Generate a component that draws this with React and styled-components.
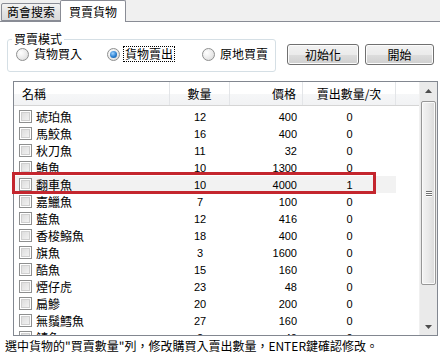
import React from "react";
import styled, { createGlobalStyle } from "styled-components";

const Global = createGlobalStyle`
  html, body { margin: 0; padding: 0; background: #fff; }
  body { font-family: "Noto Sans CJK TC", "Liberation Sans", sans-serif; font-size: 12px; color: #000; }
`;

const CJK = `"Noto Sans CJK TC", "Liberation Sans", sans-serif`;
const NUM = `"Liberation Sans", "Noto Sans CJK TC", sans-serif`;

const Window = styled.div`
  position: relative;
  width: 440px;
  height: 359px;
  overflow: hidden;
  background: #fff;
  font-family: ${CJK};
`;

const TabStrip = styled.div`
  height: 21px;
  background: #f0f0f0;
  border-bottom: 1px solid #898c95;
  display: flex;
  align-items: flex-end;
  padding-left: 1px;
`;

const Tab = styled.div`
  box-sizing: border-box;
  height: ${(p) => (p.$active ? "22px" : "18px")};
  margin-bottom: ${(p) => (p.$active ? "-1px" : "0")};
  margin-left: ${(p) => (p.$active ? "-1px" : "0")};
  padding: ${(p) => (p.$active ? "0 8px" : "0 5px")};
  border: 1px solid #898c95;
  border-bottom: ${(p) => (p.$active ? "none" : "1px solid #898c95")};
  border-radius: 2px 2px 0 0;
  background: ${(p) => (p.$active ? "#fff" : "linear-gradient(#f3f3f3, #e3e3e3 50%, #dadada)")};
  font-size: 12px;
  line-height: ${(p) => (p.$active ? "22px" : "16px")};
  white-space: nowrap;
`;

const TopRow = styled.div`
  display: flex;
  align-items: flex-start;
  padding: 10px 0 0 7px;
`;

const GroupBox = styled.fieldset`
  box-sizing: border-box;
  width: 269px;
  height: 40px;
  margin: 0;
  padding: 0 0 0 4px;
  border: 1px solid #d5dfe5;
  border-radius: 3px;
`;

const Legend = styled.legend`
  padding: 0 2px;
  font-size: 12px;
  line-height: 14px;
`;

const RadioRow = styled.div`
  display: grid;
  grid-template-columns: 91px 95px auto;
  align-items: center;
  height: 16px;
  margin-left: 4px;
`;

const RadioLabel = styled.label`
  display: flex;
  align-items: center;
  gap: 4px;
  font-size: 12px;
  line-height: 14px;
  white-space: nowrap;
`;

const RadioCircle = styled.span`
  position: relative;
  box-sizing: border-box;
  width: 13px;
  height: 13px;
  border-radius: 50%;
  border: 1px solid #8e8f8f;
  background: radial-gradient(circle at 35% 35%, #ffffff, #e8e8e8 60%, #d4d4d4);
  flex: none;
  &::after {
    content: "";
    display: ${(p) => (p.$checked ? "block" : "none")};
    position: absolute;
    left: 2px;
    top: 2px;
    width: 7px;
    height: 7px;
    border-radius: 50%;
    background: radial-gradient(circle at 40% 35%, #9fd3ff, #2a7fd0 55%, #134f8f);
  }
`;

const FocusText = styled.span`
  outline: ${(p) => (p.$focus ? "1px dotted #000" : "none")};
  outline-offset: 0;
  padding: 0 1px;
`;

const Buttons = styled.div`
  display: flex;
  gap: 6px;
  margin: 12px 0 0 11px;
`;

const Button = styled.button`
  box-sizing: border-box;
  width: ${(p) => p.$w}px;
  height: 21px;
  padding: 0;
  border: 1px solid #707070;
  border-radius: 3px;
  background: linear-gradient(#f2f2f2, #ebebeb 50%, #dddddd 51%, #cfcfcf);
  box-shadow: inset 0 0 0 1px #fcfcfc;
  font-family: ${CJK};
  font-size: 12px;
  line-height: 19px;
  color: #000;
`;

const ListBox = styled.div`
  box-sizing: border-box;
  display: flex;
  width: 425px;
  height: 255px;
  margin: 9px 0 0 13px;
  border: 1px solid #828790;
`;

const ListBody = styled.div`
  flex: 1;
  overflow: hidden;
`;

const COLS = "156px 60px 73px 93px 1fr";

const Header = styled.div`
  display: grid;
  grid-template-columns: ${COLS};
  height: 23px;
  border-bottom: 1px solid #d5d5d5;
  background: linear-gradient(#ffffff, #ffffff 50%, #f6f7f8 51%, #f1f2f4);
`;

const HeadCell = styled.div`
  display: flex;
  align-items: center;
  justify-content: ${(p) => p.$align || "flex-start"};
  padding: ${(p) => p.$pad || "0"};
  border-right: ${(p) => (p.$last ? "none" : "1px solid #e3e5e8")};
  font-size: 12px;
  white-space: nowrap;
`;

const Rows = styled.div`
  padding-top: 2px;
`;

const Row = styled.div`
  display: grid;
  grid-template-columns: 156px 60px 73px 93px;
  width: 382px;
  height: 17px;
  align-items: center;
  background: ${(p) => (p.$hot ? "#f2f2f2" : "transparent")};
`;

const NameCell = styled.div`
  display: flex;
  align-items: center;
  gap: 4px;
  padding-left: 5px;
  font-size: 12px;
  line-height: 17px;
  white-space: nowrap;
`;

const Check = styled.span`
  box-sizing: border-box;
  width: 13px;
  height: 13px;
  border: 1px solid #8e8f8f;
  background: #f4f4f4;
  box-shadow: inset 0 0 0 1px #fff, inset 0 0 0 2px #cfcfcf;
  background-image: linear-gradient(135deg, #d8d8d8, #f7f7f7);
  flex: none;
`;

const NumCell = styled.div`
  font-family: ${NUM};
  font-size: 11px;
  text-align: ${(p) => p.$align || "center"};
  padding-right: ${(p) => p.$pr || 0}px;
`;

const Scrollbar = styled.div`
  display: flex;
  flex-direction: column;
  width: 17px;
  background: #eaeaea;
  border-left: 1px solid #f0f0f0;
`;

const ArrowBtn = styled.div`
  height: 17px;
  display: flex;
  align-items: center;
  justify-content: center;
  flex: none;
`;

const Track = styled.div`
  flex: 1;
  padding: 2px 0 0 1px;
`;

const Thumb = styled.div`
  box-sizing: border-box;
  height: 184px;
  width: 15px;
  border: 1px solid #979797;
  border-radius: 2px;
  background: linear-gradient(90deg, #f4f4f4, #e9e9e9 50%, #dadada);
  box-shadow: inset 0 0 0 1px #fafafa;
  display: flex;
  align-items: center;
  justify-content: center;
`;

const Grip = styled.div`
  display: flex;
  flex-direction: column;
  gap: 1px;
  span {
    display: block;
    width: 6px;
    height: 1px;
    background: #6f6f6f;
    box-shadow: 0 1px 0 #fff;
  }
`;

const Status = styled.div`
  padding: 2px 0 0 5px;
  font-size: 12px;
  line-height: 16px;
  white-space: nowrap;
`;

const Highlight = styled.div`
  position: absolute;
  left: 12px;
  top: 172px;
  width: 364px;
  height: 22px;
  box-sizing: border-box;
  border: 3px solid #c4262e;
  pointer-events: none;
`;

const fish = [
  ["琥珀魚", 12, 400, 0],
  ["馬鮫魚", 16, 400, 0],
  ["秋刀魚", 11, 32, 0],
  ["鮪魚", 10, 1300, 0],
  ["翻車魚", 10, 4000, 1],
  ["嘉鱲魚", 7, 100, 0],
  ["藍魚", 12, 416, 0],
  ["香梭鰯魚", 18, 400, 0],
  ["旗魚", 3, 1600, 0],
  ["酷魚", 15, 160, 0],
  ["煙仔虎", 23, 48, 0],
  ["扁鰺", 20, 200, 0],
  ["無鬚鱈魚", 27, 160, 0],
  ["鯖魚", 2, 40, 0],
];

const Arrow = ({ up }) => (
  <svg width="7" height="4" viewBox="0 0 7 4">
    <path d={up ? "M3.5 0 L7 4 L0 4 Z" : "M0 0 L7 0 L3.5 4 Z"} fill="#4d4d4d" />
  </svg>
);

export default function App() {
  return (
    <Window>
      <Global />
      <TabStrip>
        <Tab>商會搜索</Tab>
        <Tab $active>買賣貨物</Tab>
      </TabStrip>
      <TopRow>
        <GroupBox>
          <Legend>買賣模式</Legend>
          <RadioRow>
            <RadioLabel>
              <RadioCircle />
              <FocusText>貨物買入</FocusText>
            </RadioLabel>
            <RadioLabel>
              <RadioCircle $checked />
              <FocusText $focus>貨物賣出</FocusText>
            </RadioLabel>
            <RadioLabel>
              <RadioCircle />
              <FocusText>原地買賣</FocusText>
            </RadioLabel>
          </RadioRow>
        </GroupBox>
        <Buttons>
          <Button $w={72}>初始化</Button>
          <Button $w={69}>開始</Button>
        </Buttons>
      </TopRow>
      <ListBox>
        <ListBody>
          <Header>
            <HeadCell $pad="0 0 0 8px">名稱</HeadCell>
            <HeadCell $align="center">數量</HeadCell>
            <HeadCell $align="flex-end" $pad="0 6px 0 0">價格</HeadCell>
            <HeadCell $align="center">賣出數量/次</HeadCell>
            <HeadCell $last />
          </Header>
          <Rows>
            {fish.map(([name, qty, price, sell], i) => (
              <Row key={name} $hot={i === 4}>
                <NameCell>
                  <Check />
                  {name}
                </NameCell>
                <NumCell>{qty}</NumCell>
                <NumCell $align="right" $pr={6}>{price}</NumCell>
                <NumCell>{sell}</NumCell>
              </Row>
            ))}
          </Rows>
        </ListBody>
        <Scrollbar>
          <ArrowBtn><Arrow up /></ArrowBtn>
          <Track>
            <Thumb>
              <Grip><span /><span /><span /></Grip>
            </Thumb>
          </Track>
          <ArrowBtn><Arrow /></ArrowBtn>
        </Scrollbar>
      </ListBox>
      <Status>選中貨物的"買賣數量"列，修改購買入賣出數量，ENTER鍵確認修改。</Status>
      <Highlight />
    </Window>
  );
}
